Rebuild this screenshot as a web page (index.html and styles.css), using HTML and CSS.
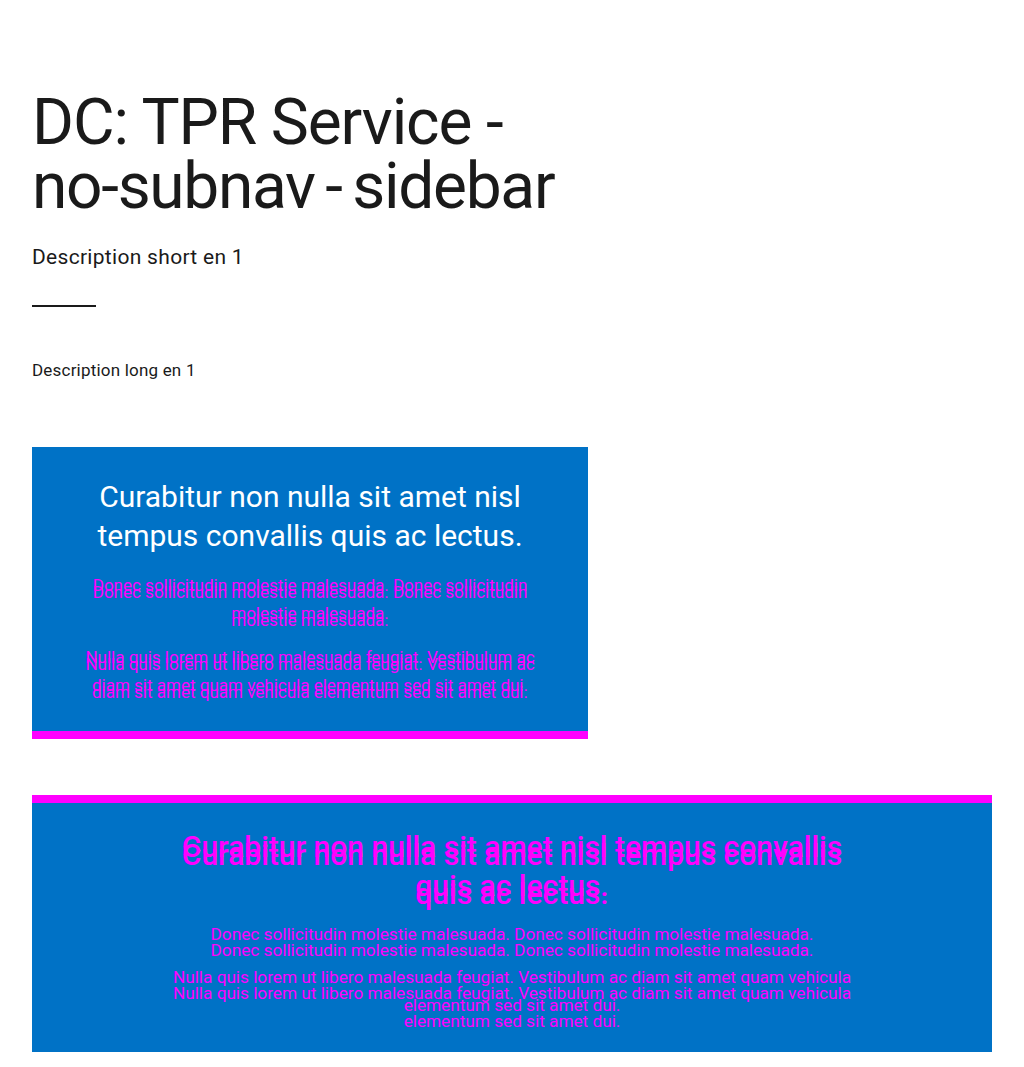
FILE: index.html
```html
<!DOCTYPE html>
<html lang="en">
<head>
<meta charset="utf-8">
<title>DC: TPR Service - no-subnav - sidebar</title>
<link rel="stylesheet" href="styles.css">
</head>
<body>
<main class="page">
  <header class="intro">
    <h1 class="title"><span class="title-line">DC: TPR Service -</span><span class="title-line title-2">no-subnav - sidebar</span></h1>
    <p class="short">Description short en 1</p>
    <hr class="rule">
    <p class="long">Description long en 1</p>
  </header>

  <section class="promo promo-narrow">
    <h2 class="promo-title">Curabitur non nulla sit amet nisl tempus convallis quis ac lectus.</h2>
    <p class="promo-text">Donec sollicitudin molestie malesuada. Donec sollicitudin molestie malesuada.</p>
    <p class="promo-text">Nulla quis lorem ut libero malesuada feugiat. Vestibulum ac diam sit amet quam vehicula elementum sed sit amet dui.</p>
  </section>

  <section class="promo promo-wide">
    <h2 class="promo-title">Curabitur non nulla sit amet nisl tempus convallis quis ac lectus.</h2>
    <p class="promo-text">Donec sollicitudin molestie malesuada. Donec sollicitudin molestie malesuada.</p>
    <p class="promo-text">Nulla quis lorem ut libero malesuada feugiat. Vestibulum ac diam sit amet quam vehicula elementum sed sit amet dui.</p>
  </section>
</main>
</body>
</html>
```
FILE: styles.css
```css
* { box-sizing: border-box; }
html, body { margin: 0; padding: 0; background: #fff; }
body {
  font-family: Roboto, "Liberation Sans", Arial, sans-serif;
  color: #1a1a1a;
}
.page {
  padding: 91px 32px 16px;
}
.intro { margin: 0; }
.title {
  margin: 0;
  font-size: 64px;
  line-height: 64px;
  font-weight: 400;
  letter-spacing: -1.1px;
}
.title-line { display: block; }
.title-2 { word-spacing: -4px; letter-spacing: -1.3px; }
.short {
  margin: 24px 0 0;
  font-size: 21px;
  line-height: 28px;
  letter-spacing: 0.3px;
}
.rule {
  margin: 34px 0 0;
  width: 64px;
  height: 2px;
  border: 0;
  background: #1a1a1a;
}
.long {
  margin: 52px 0 0;
  font-size: 17px;
  line-height: 22px;
  letter-spacing: 0.2px;
}
.promo {
  background: #0072c6;
  text-align: center;
  color: #fff;
}
.promo-narrow {
  width: 556px;
  margin-top: 66px;
  padding: 30px 50px 32px;
  border-bottom: 8px solid #ff00ff;
}
.promo-wide {
  margin-top: 56px;
  border-top: 8px solid #ff00ff;
  padding: 24px 130px 33px;
}
.promo-title {
  margin: 0;
  font-weight: 400;
  font-size: 30px;
  line-height: 39px;
  color: #fff;
}
.promo-text {
  margin: 16px 0 0;
  font-size: 17px;
  line-height: 28px;
  color: #ff00ff;
  text-shadow: 0 7px 0 #ff00ff;
}
.promo-wide .promo-title {
  font-size: 30px;
  font-weight: 500;
  color: #ff00ff;
  text-shadow: 0 8px 0 #ff00ff;
}
.promo-wide .promo-text {
  font-size: 17.2px;
  margin-top: 15px;
  text-shadow: 0 16px 0 #ff00ff;
}
```
